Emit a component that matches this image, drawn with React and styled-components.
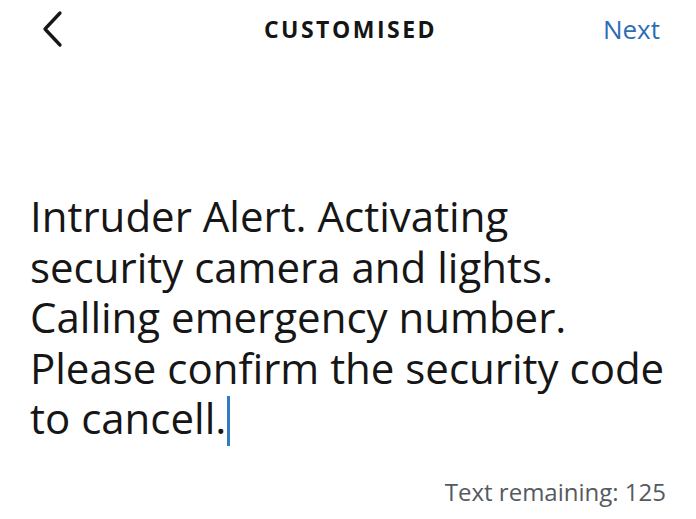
import React from 'react';
import styled, { createGlobalStyle } from 'styled-components';

const GlobalStyle = createGlobalStyle`
  html, body {
    margin: 0;
    padding: 0;
    background: #ffffff;
  }
  body {
    font-family: "Open Sans", "Noto Sans", sans-serif;
    color: #111111;
  }
`;

const Screen = styled.div`
  display: flex;
  flex-direction: column;
  height: 100vh;
  box-sizing: border-box;
  background: #ffffff;
`;

const Header = styled.header`
  display: grid;
  grid-template-columns: 120px 1fr 120px;
  align-items: center;
  height: 58px;
  padding: 0 36px 0 41px;
`;

const BackButton = styled.button`
  display: flex;
  align-items: center;
  justify-self: start;
  padding: 0;
  border: none;
  background: none;
  cursor: pointer;
`;

const Title = styled.h1`
  margin: 0;
  text-align: center;
  font-size: 23px;
  font-weight: 700;
  letter-spacing: 2.5px;
  color: #151515;
`;

const NextLink = styled.button`
  justify-self: end;
  padding: 0;
  border: none;
  background: none;
  font-family: inherit;
  font-size: 26px;
  color: #2d6db4;
  cursor: pointer;
`;

const Body = styled.main`
  flex: 1;
  padding: 133px 20px 0 30px;
`;

const Message = styled.p`
  margin: 0;
  font-size: 42px;
  line-height: 50.5px;
  color: #161616;
`;

const Caret = styled.span`
  display: inline-block;
  width: 2.5px;
  height: 50px;
  margin-left: 1px;
  vertical-align: -12px;
  background: #2f7bc4;
`;

const Footer = styled.footer`
  display: flex;
  justify-content: flex-end;
  padding: 0 30px 11px 0;
`;

const Remaining = styled.span`
  font-size: 24px;
  color: #555a5f;
`;

function ChevronLeft() {
  return (
    <svg width="22" height="38" viewBox="0 0 22 38" fill="none">
      <path d="M19 3 L4 19 L19 35" stroke="#161616" strokeWidth="3.3" strokeLinecap="round" strokeLinejoin="round" />
    </svg>
  );
}

export default function App() {
  return (
    <>
      <GlobalStyle />
      <Screen>
        <Header>
          <BackButton aria-label="Back">
            <ChevronLeft />
          </BackButton>
          <Title>CUSTOMISED</Title>
          <NextLink>Next</NextLink>
        </Header>
        <Body>
          <Message>
            Intruder Alert. Activating<br />
            security camera and lights.<br />
            Calling emergency number.<br />
            Please confirm the security code<br />
            to cancell.<Caret />
          </Message>
        </Body>
        <Footer>
          <Remaining>Text remaining: 125</Remaining>
        </Footer>
      </Screen>
    </>
  );
}
